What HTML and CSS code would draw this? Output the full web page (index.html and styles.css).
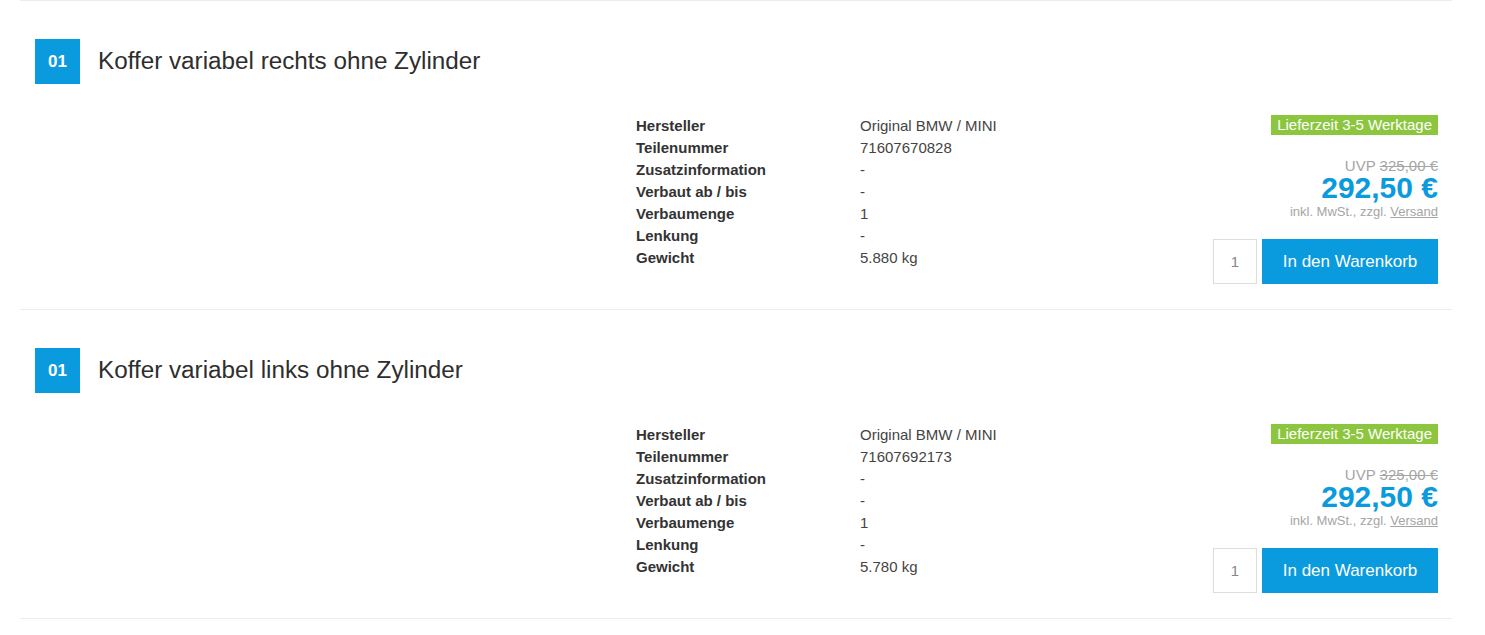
FILE: index.html
```html
<!DOCTYPE html>
<html lang="de">
<head>
<meta charset="utf-8">
<title>Teile</title>
<link rel="stylesheet" href="styles.css">
</head>
<body>
<div class="list">
  <div class="item">
    <div class="head">
      <span class="num">01</span>
      <h2 class="title">Koffer variabel rechts ohne Zylinder</h2>
    </div>
    <div class="body">
      <div class="image"></div>
      <dl class="specs">
        <dt>Hersteller</dt><dd>Original BMW / MINI</dd>
        <dt>Teilenummer</dt><dd>71607670828</dd>
        <dt>Zusatzinformation</dt><dd>-</dd>
        <dt>Verbaut ab / bis</dt><dd>-</dd>
        <dt>Verbaumenge</dt><dd>1</dd>
        <dt>Lenkung</dt><dd>-</dd>
        <dt>Gewicht</dt><dd>5.880 kg</dd>
      </dl>
      <div class="buy">
        <span class="delivery">Lieferzeit 3-5 Werktage</span>
        <div class="uvp">UVP <s>325,00 €</s></div>
        <div class="price">292,50 €</div>
        <div class="tax">inkl. MwSt., zzgl. <a href="#">Versand</a></div>
        <div class="cart">
          <input class="qty" type="text" value="1">
          <button class="btn">In den Warenkorb</button>
        </div>
      </div>
    </div>
  </div>
  <div class="item">
    <div class="head">
      <span class="num">01</span>
      <h2 class="title">Koffer variabel links ohne Zylinder</h2>
    </div>
    <div class="body">
      <div class="image"></div>
      <dl class="specs">
        <dt>Hersteller</dt><dd>Original BMW / MINI</dd>
        <dt>Teilenummer</dt><dd>71607692173</dd>
        <dt>Zusatzinformation</dt><dd>-</dd>
        <dt>Verbaut ab / bis</dt><dd>-</dd>
        <dt>Verbaumenge</dt><dd>1</dd>
        <dt>Lenkung</dt><dd>-</dd>
        <dt>Gewicht</dt><dd>5.780 kg</dd>
      </dl>
      <div class="buy">
        <span class="delivery">Lieferzeit 3-5 Werktage</span>
        <div class="uvp">UVP <s>325,00 €</s></div>
        <div class="price">292,50 €</div>
        <div class="tax">inkl. MwSt., zzgl. <a href="#">Versand</a></div>
        <div class="cart">
          <input class="qty" type="text" value="1">
          <button class="btn">In den Warenkorb</button>
        </div>
      </div>
    </div>
  </div>
</div>
</body>
</html>
```
FILE: styles.css
```css
* { box-sizing: border-box; }
html, body {
  margin: 0;
  padding: 0;
  background: #fff;
  font-family: "Liberation Sans", Arial, sans-serif;
  color: #333;
}
.list {
  margin: 0 33px 0 20px;
}
.item {
  border-top: 1px solid #ececec;
  padding: 38px 14px 25px 15px;
}
.item:last-child {
  border-bottom: 1px solid #ececec;
}
.head {
  display: flex;
  align-items: center;
  gap: 18px;
  height: 45px;
}
.num {
  width: 45px;
  height: 45px;
  background: #0a9ade;
  color: #fff;
  font-weight: bold;
  font-size: 17px;
  display: flex;
  align-items: center;
  justify-content: center;
}
.title {
  margin: 0 0 2px 0;
  font-size: 24.25px;
  font-weight: normal;
  color: #2e2e2e;
}
.body {
  display: flex;
  margin-top: 31px;
}
.image {
  width: 601px;
  flex: none;
}
.specs {
  flex: 1;
  margin: 0;
  display: grid;
  grid-template-columns: 224px 1fr;
  grid-auto-rows: 22px;
  align-content: start;
  font-size: 15px;
  line-height: 22px;
}
.specs dt {
  font-weight: bold;
  color: #333;
}
.specs dd {
  margin: 0;
  color: #444;
}
.buy {
  width: 240px;
  display: flex;
  flex-direction: column;
  align-items: flex-end;
}
.delivery {
  background: #8cc63f;
  color: #fff;
  font-size: 15px;
  line-height: 20px;
  padding: 0 6px;
}
.uvp {
  margin-top: 24px;
  font-size: 15px;
  line-height: 14px;
  color: #a5a5a5;
}
.uvp s {
  text-decoration: line-through;
}
.price {
  font-size: 30px;
  font-weight: bold;
  line-height: 30px;
  color: #0a9ade;
}
.tax {
  margin-top: 2px;
  font-size: 13px;
  line-height: 14px;
  color: #a5a5a5;
}
.tax a {
  color: #a5a5a5;
  text-decoration: underline;
}
.cart {
  margin-top: 20px;
  display: flex;
  gap: 5px;
}
.qty {
  width: 44px;
  height: 45px;
  border: 1px solid #ddd;
  text-align: center;
  font-family: "Liberation Sans", Arial, sans-serif;
  font-size: 15px;
  color: #888;
  padding: 0;
  outline: none;
}
.btn {
  width: 176px;
  height: 45px;
  border: 0;
  background: #0a9ade;
  color: #fff;
  font-family: "Liberation Sans", Arial, sans-serif;
  font-size: 17px;
  cursor: pointer;
  padding: 0;
}
```
